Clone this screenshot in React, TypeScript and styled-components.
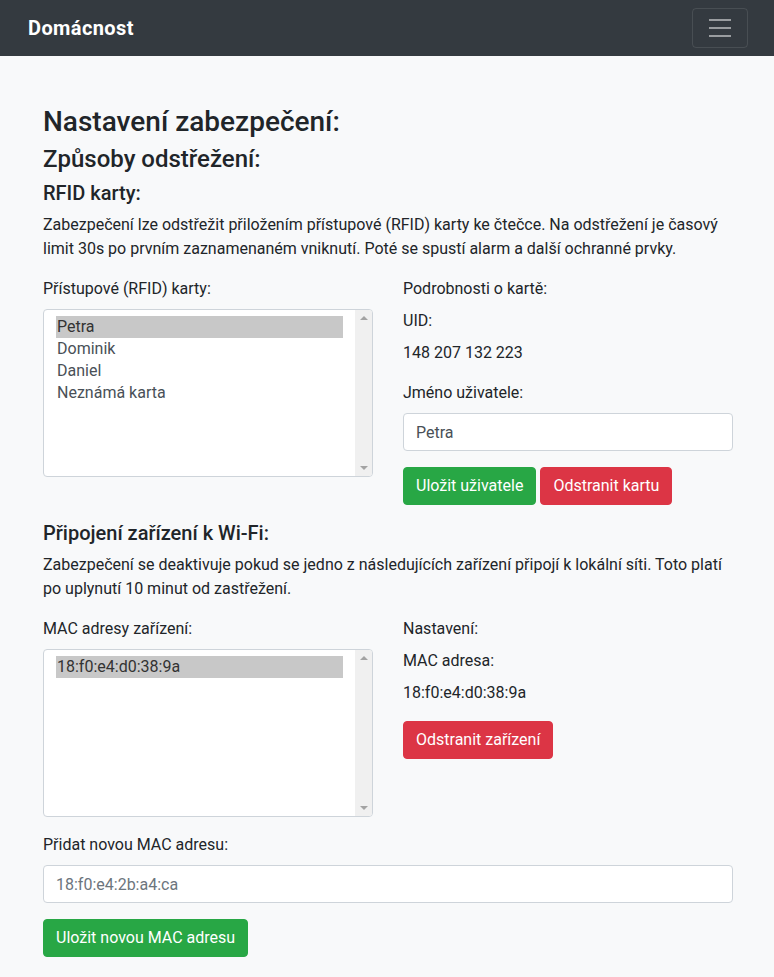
import React from "react";
import styled, { createGlobalStyle } from "styled-components";

const GlobalStyle = createGlobalStyle`
  html, body {
    margin: 0;
    padding: 0;
  }
  body {
    background: #f8f9fa;
    font-family: Roboto, "Noto Sans", sans-serif;
    font-size: 16px;
    line-height: 1.5;
    color: #212529;
  }
  * { box-sizing: border-box; }
`;

const Navbar = styled.nav`
  height: 56px;
  background: #343a40;
  display: flex;
  align-items: center;
  justify-content: space-between;
  padding: 8px 26px 8px 28px;
`;

const Brand = styled.a`
  color: #fff;
  font-size: 20px;
  font-weight: 700;
  line-height: 30px;
  text-decoration: none;
  letter-spacing: 0.4px;
`;

const Toggler = styled.button`
  width: 56px;
  height: 40px;
  border: 1px solid rgba(255, 255, 255, 0.1);
  border-radius: 4px;
  background: transparent;
  display: flex;
  align-items: center;
  justify-content: center;
  padding: 0;
`;

const Container = styled.main`
  max-width: 720px;
  margin: 0 auto;
  padding: 49px 14px 20px 16px;
`;

const Title = styled.h3<{ $size: number; $lh: number }>`
  margin: 0 0 8px;
  font-size: ${(p) => p.$size}px;
  line-height: ${(p) => p.$lh}px;
  font-weight: 500;
`;

const Paragraph = styled.p`
  margin: 0 0 16px;
`;

const Grid = styled.div`
  display: grid;
  grid-template-columns: 1fr 1fr;
  column-gap: 30px;
`;

const Column = styled.div`
  display: flex;
  flex-direction: column;
  padding-bottom: 16px;
`;

const Label = styled.label`
  display: block;
  margin-bottom: 8px;
`;

const Info = styled.div<{ $gap?: number }>`
  margin-bottom: ${(p) => p.$gap ?? 8}px;
`;

const ListBox = styled.div`
  height: 168px;
  background: #fff;
  border: 1px solid #ced4da;
  border-radius: 4px;
  display: flex;
  overflow: hidden;
`;

const ListItems = styled.ul`
  flex: 1;
  list-style: none;
  margin: 0;
  padding: 6px 12px;
  color: #495057;
`;

const ListItem = styled.li<{ $selected?: boolean }>`
  height: 22px;
  line-height: 22px;
  padding-left: 1px;
  background: ${(p) => (p.$selected ? "#c8c8c8" : "transparent")};
  color: ${(p) => (p.$selected ? "#333" : "#495057")};
`;

const ScrollTrack = styled.div`
  width: 17px;
  background: #f0f0f0;
  display: flex;
  flex-direction: column;
  justify-content: space-between;
  align-items: center;
  padding: 6px 0 6px;
`;

const Arrow = styled.span<{ $down?: boolean }>`
  width: 0;
  height: 0;
  border-left: 4px solid transparent;
  border-right: 4px solid transparent;
  ${(p) =>
    p.$down
      ? "border-top: 4px solid #a3a3a3;"
      : "border-bottom: 4px solid #a3a3a3;"}
`;

const Input = styled.input`
  display: block;
  width: 100%;
  height: 38px;
  padding: 6px 12px;
  font-family: inherit;
  font-size: 16px;
  line-height: 24px;
  color: #495057;
  background: #fff;
  border: 1px solid #ced4da;
  border-radius: 4px;
  margin: 0 0 16px;
  outline: none;
  &::placeholder {
    color: #6c757d;
    opacity: 1;
  }
`;

const ButtonRow = styled.div`
  display: flex;
  gap: 4px;
`;

const Button = styled.button<{ $variant: "success" | "danger" }>`
  height: 38px;
  padding: 6px 12px;
  margin: 0;
  font-family: inherit;
  font-size: 16px;
  line-height: 24px;
  color: #fff;
  border: 1px solid ${(p) => (p.$variant === "success" ? "#28a745" : "#dc3545")};
  background: ${(p) => (p.$variant === "success" ? "#28a745" : "#dc3545")};
  border-radius: 4px;
  cursor: pointer;
  align-self: flex-start;
`;

const FullRow = styled.div`
  display: flex;
  flex-direction: column;
  align-items: stretch;
`;

function ListBoxView({ items }: { items: string[] }) {
  return (
    <ListBox>
      <ListItems>
        {items.map((it, i) => (
          <ListItem key={it} $selected={i === 0}>
            {it}
          </ListItem>
        ))}
      </ListItems>
      <ScrollTrack>
        <Arrow />
        <Arrow $down />
      </ScrollTrack>
    </ListBox>
  );
}

export default function App() {
  return (
    <>
      <GlobalStyle />
      <Navbar>
        <Brand href="#">Domácnost</Brand>
        <Toggler aria-label="menu">
          <svg width="30" height="30" viewBox="0 0 30 30">
            <path
              d="M4 7h22M4 15h22M4 23h22"
              stroke="rgba(255,255,255,0.5)"
              strokeWidth="2"
              strokeLinecap="butt"
            />
          </svg>
        </Toggler>
      </Navbar>
      <Container>
        <Title $size={28} $lh={33}>Nastavení zabezpečení:</Title>
        <Title $size={24} $lh={27}>Způsoby odstřežení:</Title>
        <Title $size={20} $lh={24}>RFID karty:</Title>
        <Paragraph>
          Zabezpečení lze odstřežit přiložením přístupové (RFID) karty ke čtečce. Na odstřežení je časový
          limit 30s po prvním zaznamenaném vniknutí. Poté se spustí alarm a další ochranné prvky.
        </Paragraph>
        <Grid>
          <Column>
            <Label>Přístupové (RFID) karty:</Label>
            <ListBoxView items={["Petra", "Dominik", "Daniel", "Neznámá karta"]} />
          </Column>
          <Column>
            <Info>Podrobnosti o kartě:</Info>
            <Info>UID:</Info>
            <Info $gap={16}>148 207 132 223</Info>
            <Label>Jméno uživatele:</Label>
            <Input defaultValue="Petra" />
            <ButtonRow>
              <Button $variant="success">Uložit uživatele</Button>
              <Button $variant="danger">Odstranit kartu</Button>
            </ButtonRow>
          </Column>
        </Grid>
        <Title $size={20} $lh={24}>Připojení zařízení k Wi-Fi:</Title>
        <Paragraph>
          Zabezpečení se deaktivuje pokud se jedno z následujících zařízení připojí k lokální síti. Toto platí
          po uplynutí 10 minut od zastřežení.
        </Paragraph>
        <Grid>
          <Column>
            <Label>MAC adresy zařízení:</Label>
            <ListBoxView items={["18:f0:e4:d0:38:9a"]} />
          </Column>
          <Column>
            <Info>Nastavení:</Info>
            <Info>MAC adresa:</Info>
            <Info $gap={16}>18:f0:e4:d0:38:9a</Info>
            <Button $variant="danger">Odstranit zařízení</Button>
          </Column>
        </Grid>
        <FullRow>
          <Label>Přidat novou MAC adresu:</Label>
          <Input placeholder="18:f0:e4:2b:a4:ca" />
          <Button $variant="success">Uložit novou MAC adresu</Button>
        </FullRow>
      </Container>
    </>
  );
}
